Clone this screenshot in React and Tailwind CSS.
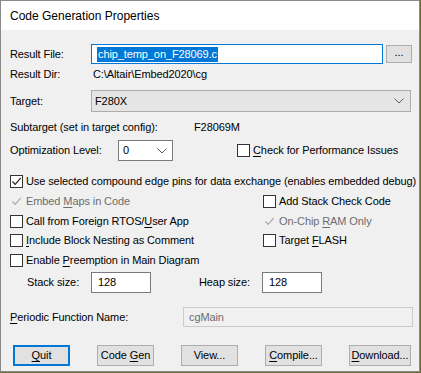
import React from "react";

const Chevron = ({ className = "" }) => (
  <svg width="10" height="6" viewBox="0 0 10 6" className={className}>
    <path d="M0.5 0.5 L5 5 L9.5 0.5" fill="none" stroke="#606060" strokeWidth="1" />
  </svg>
);

const Check = ({ checked, disabled }) => (
  <span
    className={
      "relative inline-block w-[13px] h-[13px] shrink-0 border " +
      (disabled ? "border-[#f0f0f0] bg-[#f0f0f0]" : "border-[#333333] bg-white")
    }
  >
    {checked && (
      <svg width="11" height="11" viewBox="0 0 11 11" className="absolute left-0 top-0">
        <path
          d="M1.5 5.5 L4.2 8.3 L9.8 1.8"
          fill="none"
          stroke={disabled ? "#a8a8a8" : "#222222"}
          strokeWidth="1.2"
        />
      </svg>
    )}
  </span>
);

const U = ({ children }) => <span className="underline underline-offset-2">{children}</span>;

const CheckRow = ({ checked, disabled, children, className = "" }) => (
  <div className={"flex items-center gap-[3px] whitespace-nowrap " + className}>
    <Check checked={checked} disabled={disabled} />
    <span className={disabled ? "text-[#6d6d6d]" : "text-black"}>{children}</span>
  </div>
);

const Btn = ({ children, w = "w-[57px]", def }) => (
  <div
    className={
      "h-[21px] flex items-center justify-center bg-[#e1e1e1] whitespace-nowrap " +
      w +
      (def ? " border-2 border-[#0078d7]" : " border border-[#adadad]")
    }
  >
    <span>{children}</span>
  </div>
);

export default function App() {
  return (
    <div
      className="w-[421px] h-[373px] bg-[#6b6b3a] text-[11px] tracking-[-0.1px] text-black leading-none"
      style={{ fontFamily: '"Liberation Sans", Arial, sans-serif' }}
    >
      <div className="w-[420px] h-[372px] border border-[#8a8a8a] bg-[#f0f0f0] flex flex-col whitespace-nowrap">
        <div className="h-[29px] bg-white flex items-center pl-[9px] text-[12px] tracking-normal">
          <span>Code Generation Properties</span>
        </div>
        <div className="flex flex-col pl-[9px]">
          {/* Result File */}
          <div className="mt-[14px] h-[20px] flex items-center">
            <span className="w-[81px]">Result File:</span>
            <div className="w-[292px] h-[20px] bg-white border border-[#0078d7] flex items-center pl-[5px]">
              <span className="bg-[#0078d7] text-white leading-[15px] px-[1px]">chip_temp_on_F28069.c</span>
            </div>
            <div className="ml-[3px] w-[26px] h-[18px] bg-[#e1e1e1] border border-[#adadad] flex items-center justify-center pb-[3px]">
              <span>...</span>
            </div>
          </div>
          {/* Result Dir */}
          <div className="mt-[2px] h-[16px] flex items-center">
            <span className="w-[83px]">Result Dir:</span>
            <span>C:\Altair\Embed2020\cg</span>
          </div>
          {/* Target */}
          <div className="mt-[8px] h-[22px] flex items-center">
            <span className="w-[81px]">Target:</span>
            <div className="w-[320px] h-[22px] bg-[#e5e5e5] border border-[#adadad] flex items-center justify-between pl-[3px] pr-[6px]">
              <span>F280X</span>
              <Chevron />
            </div>
          </div>
          {/* Subtarget */}
          <div className="mt-[7px] h-[16px] flex items-center">
            <span className="w-[184px]">Subtarget (set in target config):</span>
            <span>F28069M</span>
          </div>
          {/* Optimization */}
          <div className="mt-[5px] h-[21px] flex items-center">
            <span className="w-[108px]">Optimization Level:</span>
            <div className="w-[55px] h-[21px] bg-white border border-[#7a7a7a] flex items-center justify-between pl-[4px] pr-[5px]">
              <span>0</span>
              <Chevron />
            </div>
            <CheckRow className="ml-[64px]">
              <U>C</U>heck for Performance Issues
            </CheckRow>
          </div>
          {/* Use selected */}
          <CheckRow checked className="mt-[12px] h-[16px]">
            Use selected compound edge pins for data exchange (enables embedded debug)
          </CheckRow>
          {/* grid */}
          <div className="mt-[3px] grid grid-cols-[253px_1fr] auto-rows-[19.5px] items-center">
            <CheckRow checked disabled>
              Embed <U>M</U>aps in Code
            </CheckRow>
            <CheckRow>Add Stack Check Code</CheckRow>
            <CheckRow>
              Call from Foreign RTOS/<U>U</U>ser App
            </CheckRow>
            <CheckRow checked disabled>
              On-Chip <U>R</U>AM Only
            </CheckRow>
            <CheckRow>
              <U>I</U>nclude Block Nesting as Comment
            </CheckRow>
            <CheckRow>
              Target <U>F</U>LASH
            </CheckRow>
            <CheckRow>
              Enable <U>P</U>reemption in Main Diagram
            </CheckRow>
          </div>
          {/* Stack / Heap */}
          <div className="mt-[2px] h-[21px] flex items-center">
            <span className="w-[81px] pl-[17px]">Stack size:</span>
            <div className="w-[60px] h-[21px] bg-white border border-[#7a7a7a] flex items-center pl-[6px]">
              <span>128</span>
            </div>
            <span className="ml-[48px] w-[63px]">Heap size:</span>
            <div className="w-[60px] h-[21px] bg-white border border-[#7a7a7a] flex items-center pl-[6px]">
              <span>128</span>
            </div>
          </div>
          {/* Periodic */}
          <div className="mt-[14px] h-[20px] flex items-center">
            <span className="w-[173px]">
              <U>P</U>eriodic Function Name:
            </span>
            <div className="w-[230px] h-[20px] bg-[#f0f0f0] border border-[#cccccc] flex items-center pl-[5px] text-[#6d6d6d]">
              <span>cgMain</span>
            </div>
          </div>
          {/* Buttons */}
          <div className="mt-[18px] flex items-center pl-[3px] gap-[27px]">
            <Btn def>
              <U>Q</U>uit
            </Btn>
            <Btn>
              Code <U>G</U>en
            </Btn>
            <Btn>View...</Btn>
            <Btn>
              <U>C</U>ompile...
            </Btn>
            <Btn w="w-[62px]">
              <U>D</U>ownload...
            </Btn>
          </div>
        </div>
      </div>
    </div>
  );
}
